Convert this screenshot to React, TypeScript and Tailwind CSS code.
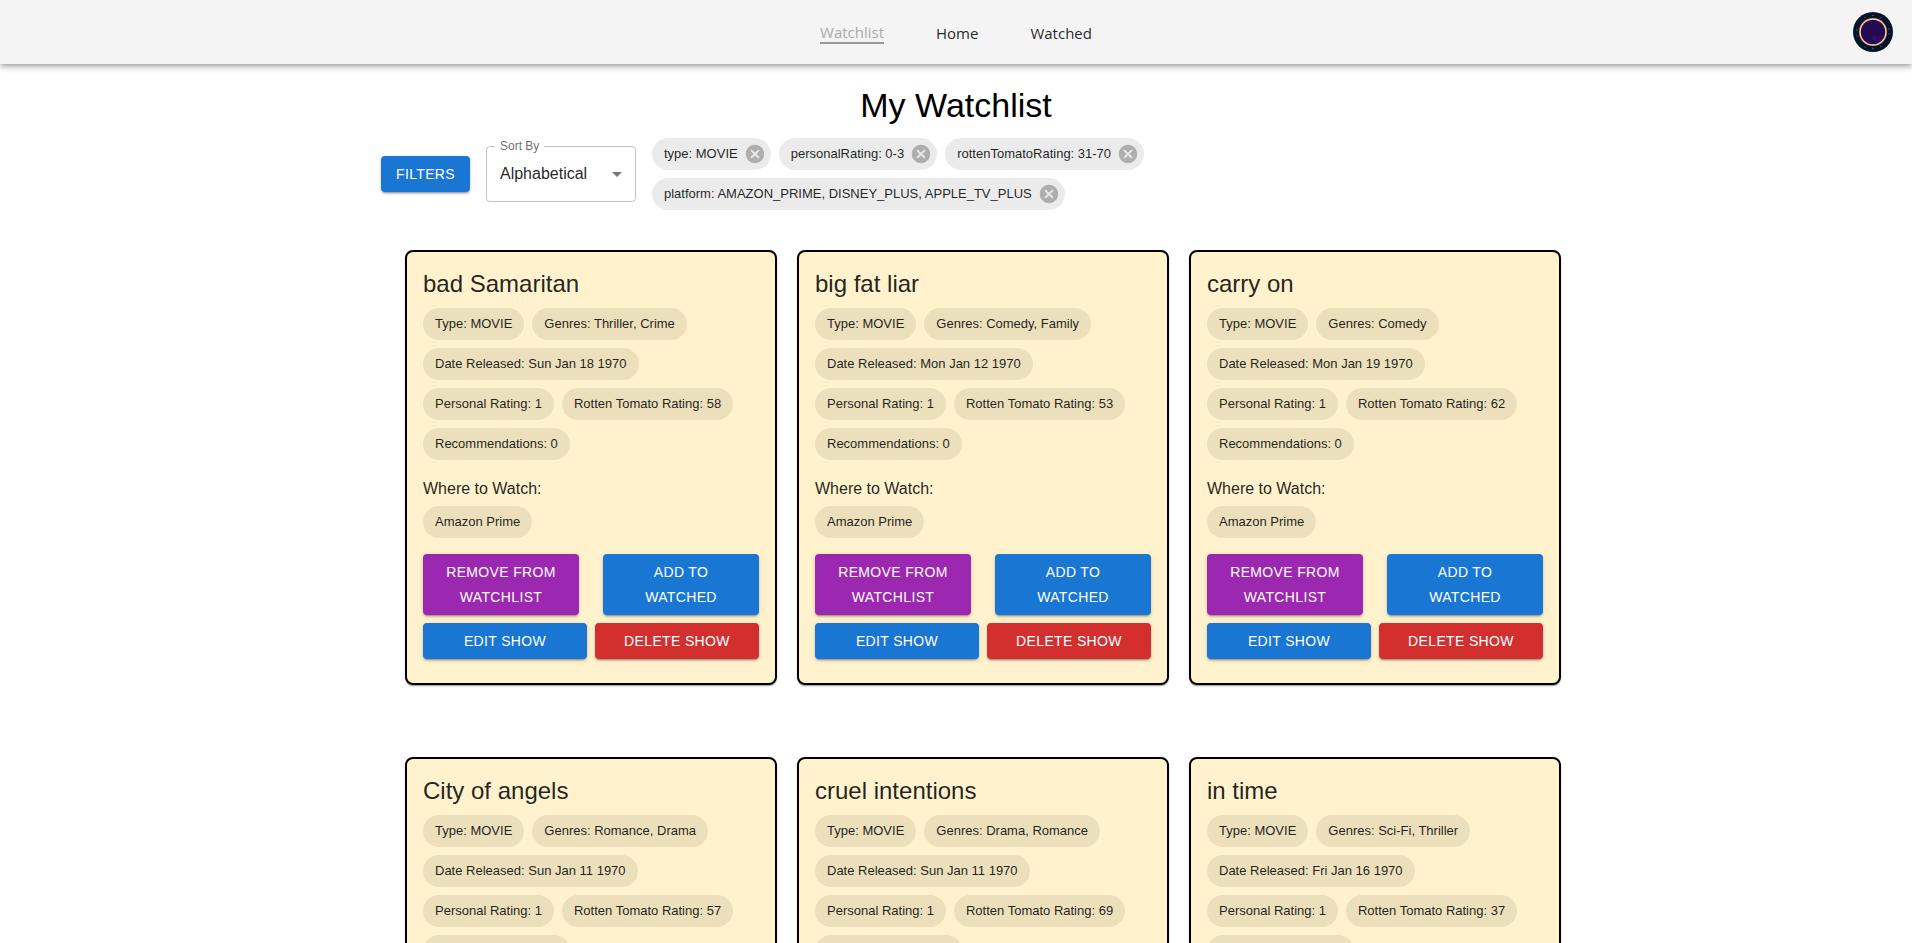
import type { ReactNode } from "react";

type Show = {
  title: string;
  genres: string;
  released: string;
  personal: number;
  tomato: number;
};

const shows: Show[] = [
  { title: "bad Samaritan", genres: "Thriller, Crime", released: "Sun Jan 18 1970", personal: 1, tomato: 58 },
  { title: "big fat liar", genres: "Comedy, Family", released: "Mon Jan 12 1970", personal: 1, tomato: 53 },
  { title: "carry on", genres: "Comedy", released: "Mon Jan 19 1970", personal: 1, tomato: 62 },
  { title: "City of angels", genres: "Romance, Drama", released: "Sun Jan 11 1970", personal: 1, tomato: 57 },
  { title: "cruel intentions", genres: "Drama, Romance", released: "Sun Jan 11 1970", personal: 1, tomato: 69 },
  { title: "in time", genres: "Sci-Fi, Thriller", released: "Fri Jan 16 1970", personal: 1, tomato: 37 },
];

const filters = [
  "type: MOVIE",
  "personalRating: 0-3",
  "rottenTomatoRating: 31-70",
  "platform: AMAZON_PRIME, DISNEY_PLUS, APPLE_TV_PLUS",
];

const tones = {
  blue: "bg-[#1976d2]",
  purple: "bg-[#9c27b0]",
  red: "bg-[#d32f2f]",
};

function Button({ tone, children }: { tone: keyof typeof tones; children: ReactNode }) {
  return (
    <button
      type="button"
      className={`${tones[tone]} cursor-pointer rounded px-[15px] pt-[6px] pb-[5px] text-sm leading-[25px] tracking-wide text-white uppercase shadow-[0_3px_1px_-2px_rgba(0,0,0,0.2),0_2px_2px_0_rgba(0,0,0,0.14),0_1px_5px_0_rgba(0,0,0,0.12)]`}
    >
      {children}
    </button>
  );
}

function Chip({ children }: { children: ReactNode }) {
  return (
    <li className="flex h-8 items-center rounded-full bg-black/8 px-3 text-[13px] whitespace-nowrap">{children}</li>
  );
}

function FilterChip({ label }: { label: string }) {
  return (
    <li className="flex h-8 items-center rounded-full bg-black/8 pr-[5px] pl-3 text-[13px] whitespace-nowrap text-black/87">
      {label}
      <button type="button" aria-label={`Remove ${label}`} className="ml-[6px] cursor-pointer text-black/26">
        <svg viewBox="0 0 24 24" className="size-[22px] fill-current" aria-hidden="true">
          <path d="M12 2C6.47 2 2 6.47 2 12s4.47 10 10 10 10-4.47 10-10S17.53 2 12 2zm5 13.59L15.59 17 12 13.41 8.41 17 7 15.59 10.59 12 7 8.41 8.41 7 12 10.59 15.59 7 17 8.41 13.41 12 17 15.59z" />
        </svg>
      </button>
    </li>
  );
}

function ShowCard({ show }: { show: Show }) {
  return (
    <article className="rounded-lg border-2 border-black bg-[#fff2cd] px-4 pt-4 pb-6 text-black/87 shadow-[0_2px_1px_-1px_rgba(0,0,0,0.2),0_1px_1px_0_rgba(0,0,0,0.14),0_1px_3px_0_rgba(0,0,0,0.12)]">
      <h2 className="text-2xl leading-8">{show.title}</h2>
      <ul className="mt-2 flex flex-wrap gap-2">
        <Chip>Type: MOVIE</Chip>
        <Chip>Genres: {show.genres}</Chip>
        <Chip>Date Released: {show.released}</Chip>
        <Chip>Personal Rating: {show.personal}</Chip>
        <Chip>Rotten Tomato Rating: {show.tomato}</Chip>
        <Chip>Recommendations: 0</Chip>
      </ul>
      <h3 className="mt-4 text-base leading-[26px]">Where to Watch:</h3>
      <ul className="mt-1 flex flex-wrap gap-2">
        <Chip>Amazon Prime</Chip>
      </ul>
      <div className="mt-4 grid grid-cols-2 gap-6">
        <Button tone="purple">Remove from Watchlist</Button>
        <Button tone="blue">Add to Watched</Button>
      </div>
      <div className="mt-2 grid grid-cols-2 gap-2">
        <Button tone="blue">Edit Show</Button>
        <Button tone="red">Delete Show</Button>
      </div>
    </article>
  );
}

function Avatar() {
  return (
    <svg viewBox="0 0 40 40" className="size-10" aria-hidden="true">
      <circle cx="20" cy="20" r="20" fill="#04152b" />
      <circle cx="20" cy="20" r="14" fill="#e8935a" />
      <circle cx="20" cy="20" r="13.2" fill="#ffe2bf" />
      <circle cx="20" cy="20" r="12.3" fill="#240a50" />
      <g fill="none" stroke="#43158a" strokeWidth="0.9">
        <circle cx="21.5" cy="26" r="1.5" />
        <path d="M24.5 30c0-3 2-5 5-5.5M26.5 29.5c.5-1.500 1.500-2.500 3-3" />
      </g>
      <g fill="#8b4a45">
        <circle cx="20" cy="3.500" r="0.8" />
        <circle cx="12" cy="5.500" r="0.7" />
        <circle cx="28" cy="5.500" r="0.7" />
        <circle cx="4" cy="18" r="0.8" />
        <circle cx="4" cy="24" r="0.6" />
        <circle cx="36" cy="17" r="0.8" />
        <circle cx="36" cy="22" r="0.7" />
        <circle cx="12" cy="35" r="0.7" />
        <circle cx="20" cy="36.500" r="0.8" />
        <circle cx="28" cy="34.500" r="0.7" />
      </g>
    </svg>
  );
}

export default function App() {
  return (
    <div className="min-h-screen bg-white font-['Liberation_Sans',Arial,sans-serif] text-black">
      <header className="grid h-16 grid-cols-[1fr_auto_1fr] items-center bg-[#f4f4f4] px-[19px] shadow-[0_2px_4px_-1px_rgba(0,0,0,0.2),0_4px_5px_0_rgba(0,0,0,0.14),0_1px_10px_0_rgba(0,0,0,0.12)]">
        <nav className="col-start-2 flex items-center gap-[52px] pt-0.5 font-['Segoe_UI','Open_Sans',sans-serif] text-[15px] leading-5 text-black/87">
          <a href="#watchlist" aria-current="page" className="border-b-2 border-[#999] text-[#aaa]">
            Watchlist
          </a>
          <a href="#home">Home</a>
          <a href="#watched">Watched</a>
        </nav>
        <button type="button" aria-label="Account" className="cursor-pointer justify-self-end rounded-full">
          <Avatar />
        </button>
      </header>

      <main className="pt-[21px] pb-16">
        <h1 className="text-center text-[34px] leading-10">My Watchlist</h1>

        <div className="mx-auto max-w-[1210px]">
          <div className="mt-[13px] flex items-center gap-4 pl-[30px]">
            <Button tone="blue">Filters</Button>
            <div className="relative w-[150px] shrink-0">
              <label htmlFor="sort" className="absolute -top-2 left-[9px] bg-white px-[5px] text-xs leading-4 text-black/60">
                Sort By
              </label>
              <select
                id="sort"
                defaultValue="Alphabetical"
                className="h-14 w-full appearance-none rounded border border-black/23 bg-transparent pr-8 pl-[13px] text-base text-black/87"
              >
                <option>Alphabetical</option>
              </select>
              <svg
                viewBox="0 0 24 24"
                className="pointer-events-none absolute top-4 right-[7px] size-6 fill-black/54"
                aria-hidden="true"
              >
                <path d="M7 10l5 5 5-5z" />
              </svg>
            </div>
            <ul className="flex max-w-[500px] flex-wrap gap-2">
              {filters.map((label) => (
                <FilterChip key={label} label={label} />
              ))}
            </ul>
          </div>

          <div className="mt-10 grid grid-cols-1 gap-x-5 gap-y-[72px] pl-[54px] md:grid-cols-2 lg:grid-cols-3">
            {shows.map((show) => (
              <ShowCard key={show.title} show={show} />
            ))}
          </div>
        </div>
      </main>
    </div>
  );
}
